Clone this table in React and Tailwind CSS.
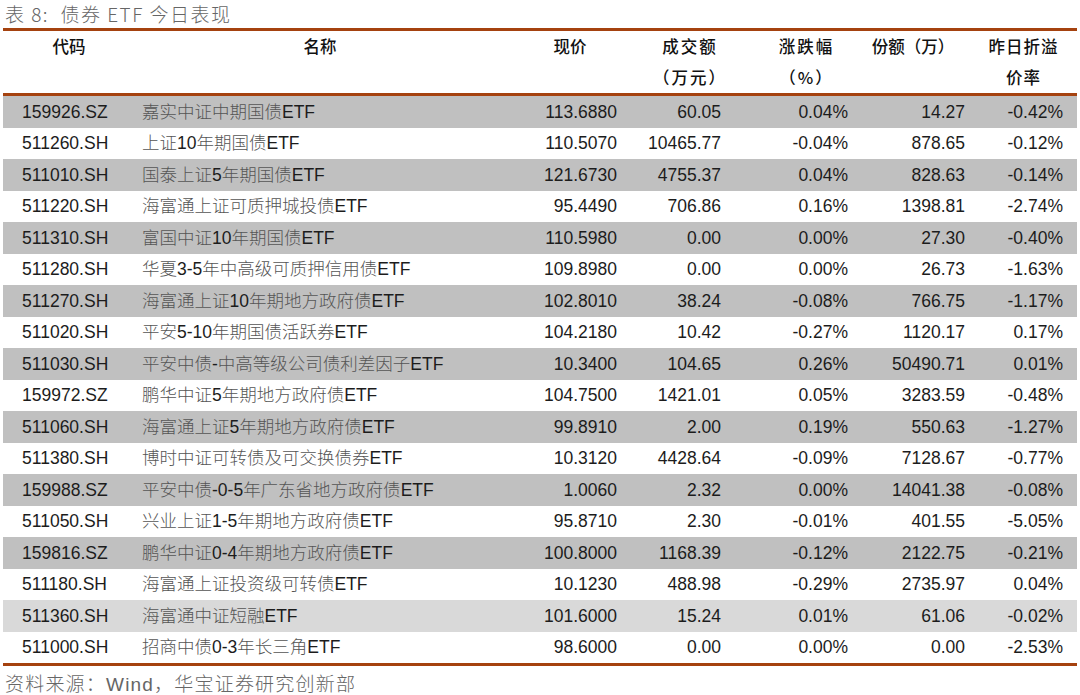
import React from 'react';

const rows = [
  ['159926.SZ', '嘉实中证中期国债ETF', '113.6880', '60.05', '0.04%', '14.27', '-0.42%'],
  ['511260.SH', '上证10年期国债ETF', '110.5070', '10465.77', '-0.04%', '878.65', '-0.12%'],
  ['511010.SH', '国泰上证5年期国债ETF', '121.6730', '4755.37', '0.04%', '828.63', '-0.14%'],
  ['511220.SH', '海富通上证可质押城投债ETF', '95.4490', '706.86', '0.16%', '1398.81', '-2.74%'],
  ['511310.SH', '富国中证10年期国债ETF', '110.5980', '0.00', '0.00%', '27.30', '-0.40%'],
  ['511280.SH', '华夏3-5年中高级可质押信用债ETF', '109.8980', '0.00', '0.00%', '26.73', '-1.63%'],
  ['511270.SH', '海富通上证10年期地方政府债ETF', '102.8010', '38.24', '-0.08%', '766.75', '-1.17%'],
  ['511020.SH', '平安5-10年期国债活跃券ETF', '104.2180', '10.42', '-0.27%', '1120.17', '0.17%'],
  ['511030.SH', '平安中债-中高等级公司债利差因子ETF', '10.3400', '104.65', '0.26%', '50490.71', '0.01%'],
  ['159972.SZ', '鹏华中证5年期地方政府债ETF', '104.7500', '1421.01', '0.05%', '3283.59', '-0.48%'],
  ['511060.SH', '海富通上证5年期地方政府债ETF', '99.8910', '2.00', '0.19%', '550.63', '-1.27%'],
  ['511380.SH', '博时中证可转债及可交换债券ETF', '10.3120', '4428.64', '-0.09%', '7128.67', '-0.77%'],
  ['159988.SZ', '平安中债-0-5年广东省地方政府债ETF', '1.0060', '2.32', '0.00%', '14041.38', '-0.08%'],
  ['511050.SH', '兴业上证1-5年期地方政府债ETF', '95.8710', '2.30', '-0.01%', '401.55', '-5.05%'],
  ['159816.SZ', '鹏华中证0-4年期地方政府债ETF', '100.8000', '1168.39', '-0.12%', '2122.75', '-0.21%'],
  ['511180.SH', '海富通上证投资级可转债ETF', '10.1230', '488.98', '-0.29%', '2735.97', '0.04%'],
  ['511360.SH', '海富通中证短融ETF', '101.6000', '15.24', '0.01%', '61.06', '-0.02%'],
  ['511000.SH', '招商中债0-3年长三角ETF', '98.6000', '0.00', '0.00%', '0.00', '-2.53%'],
];

const grid = 'grid grid-cols-[132px_370px_130px_110px_123px_102px_107px]';

// split name into CJK / latin runs so the song-style chars can be lighter
const NameText = ({ text }) => {
  const parts = text.match(/[\u4e00-\u9fff]+|[^\u4e00-\u9fff]+/g) || [];
  return parts.map((p, i) =>
    /[\u4e00-\u9fff]/.test(p) ? (
      <span key={i} className="text-[#555555] font-light">{p}</span>
    ) : (
      <span key={i}>{p}</span>
    )
  );
};

const Rule = () => <div className="mx-[3px] h-[3px] bg-[#a5420f]" />;

export default function App() {
  return (
    <div className="w-[1080px] h-[695px] bg-white overflow-hidden font-['Liberation_Sans','Noto_Sans_CJK_SC',sans-serif]">
      <div className="h-[28px] pl-[5px] leading-[28px] text-[19px] tracking-[1.5px] text-[#666666] font-['Noto_Sans_CJK_SC',sans-serif] font-light whitespace-pre">
        表 8:  债券 ETF 今日表现
      </div>
      <Rule />

      <div className={`${grid} mx-[3px] h-[62px] leading-[31px] text-[16.5px] text-[#111111] font-['Noto_Sans_CJK_SC',sans-serif] font-medium`}>
        <div className="text-center">代码</div>
        <div className="text-center">名称</div>
        <div className="text-center">现价</div>
        <div className="text-center tracking-[2px]">
          <div>成交额</div>
          <div>（万元）</div>
        </div>
        <div className="text-center tracking-[2px]">
          <div>涨跌幅</div>
          <div>（%）</div>
        </div>
        <div className="text-center pr-[12px]">份额（万）</div>
        <div className="text-center tracking-[1px]">
          <div>昨日折溢</div>
          <div>价率</div>
        </div>
      </div>
      <Rule />

      <div className="mx-[3px]">
        {rows.map((r, i) => {
          const odd = i % 2 === 0;
          const bg = odd ? (i === 16 ? 'bg-[#d9d9d9]' : 'bg-[#c0c0c0]') : 'bg-white';
          return (
            <div
              key={r[0]}
              className={`${grid} ${bg} ${odd ? 'h-[32px]' : 'h-[31px]'} items-center text-[17.5px] text-[#1c1c1c]`}
            >
              <div className="pl-[19px]">{r[0]}</div>
              <div className="pl-[7px] whitespace-nowrap">
                <NameText text={r[1]} />
              </div>
              <div className="text-right pr-[18px]">{r[2]}</div>
              <div className="text-right pr-[24px]">{r[3]}</div>
              <div className="text-right pr-[20px]">{r[4]}</div>
              <div className="text-right pr-[5px]">{r[5]}</div>
              <div className="text-right pr-[14px]">{r[6]}</div>
            </div>
          );
        })}
      </div>
      <Rule />

      <div className="mt-[6px] pl-[5px] leading-[22px] text-[19px] tracking-[1.2px] text-[#666666] font-light whitespace-nowrap">
        <span className="font-['Noto_Sans_CJK_SC',sans-serif]">资料来源：</span>
        <span>Wind</span>
        <span className="font-['Noto_Sans_CJK_SC',sans-serif]">，华宝证券研究创新部</span>
      </div>
    </div>
  );
}
